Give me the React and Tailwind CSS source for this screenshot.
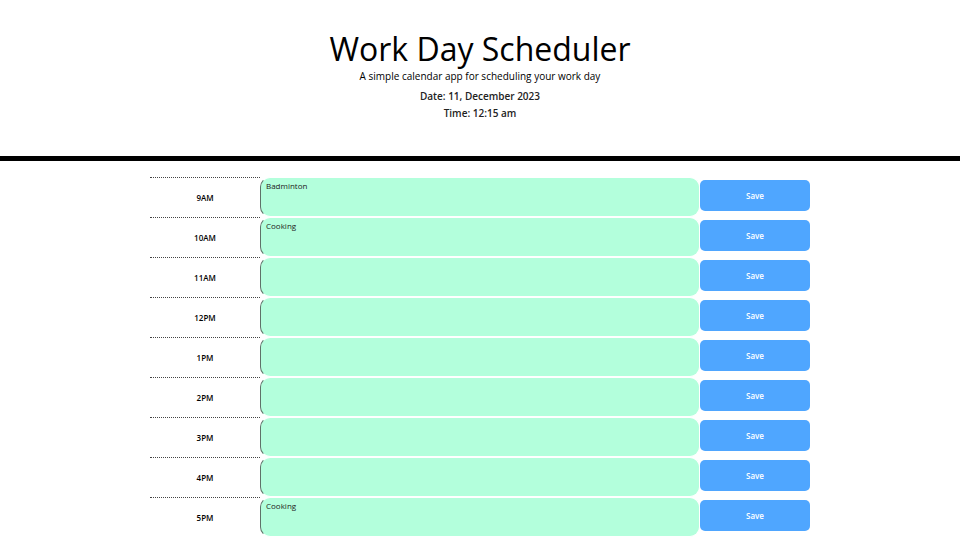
const hours = [
  { label: '9AM', text: 'Badminton' },
  { label: '10AM', text: 'Cooking' },
  { label: '11AM', text: '' },
  { label: '12PM', text: '' },
  { label: '1PM', text: '' },
  { label: '2PM', text: '' },
  { label: '3PM', text: '' },
  { label: '4PM', text: '' },
  { label: '5PM', text: 'Cooking' },
];

export default function App() {
  return (
    <div className="min-h-[540px] bg-white font-['Open_Sans',sans-serif] text-black">
      <header className="pt-[31px] text-center">
        <h1 className="text-[32px] leading-[36px] font-normal">Work Day Scheduler</h1>
        <p className="mt-[3px] text-[10px] leading-[12px]">A simple calendar app for scheduling your work day</p>
        <p className="mt-[6px] text-[10px] leading-[17px] font-semibold text-[#222]">Date: 11, December 2023</p>
        <p className="text-[10px] leading-[17px] font-semibold text-[#222]">Time: 12:15 am</p>
      </header>

      <div className="mt-[34px] h-[5px] bg-black" />

      <main className="mx-auto mt-[16px] w-[660px]">
        {hours.map((h) => (
          <TimeBlock key={h.label} hour={h.label} text={h.text} />
        ))}
      </main>
    </div>
  );
}

function TimeBlock({ hour, text }) {
  return (
    <div className="grid h-[40px] grid-cols-[110px_440px_110px]">
      <div className="flex items-center justify-center border-t border-dotted border-[#444] text-[8px] font-semibold">
        {hour}
      </div>
      <textarea
        defaultValue={text}
        className="h-[40px] w-[440px] resize-none rounded-[10px] border border-white border-l-[#5f7268] bg-[#b3ffdc] px-[5px] py-[2px] text-[8px] leading-[12px] text-[#222] outline-none"
      />
      <div className="pt-[3px]">
        <button
          type="button"
          className="h-[31px] w-[110px] rounded-[5px] bg-[#4fa6ff] text-[8px] font-semibold text-white"
        >
          Save
        </button>
      </div>
    </div>
  );
}
